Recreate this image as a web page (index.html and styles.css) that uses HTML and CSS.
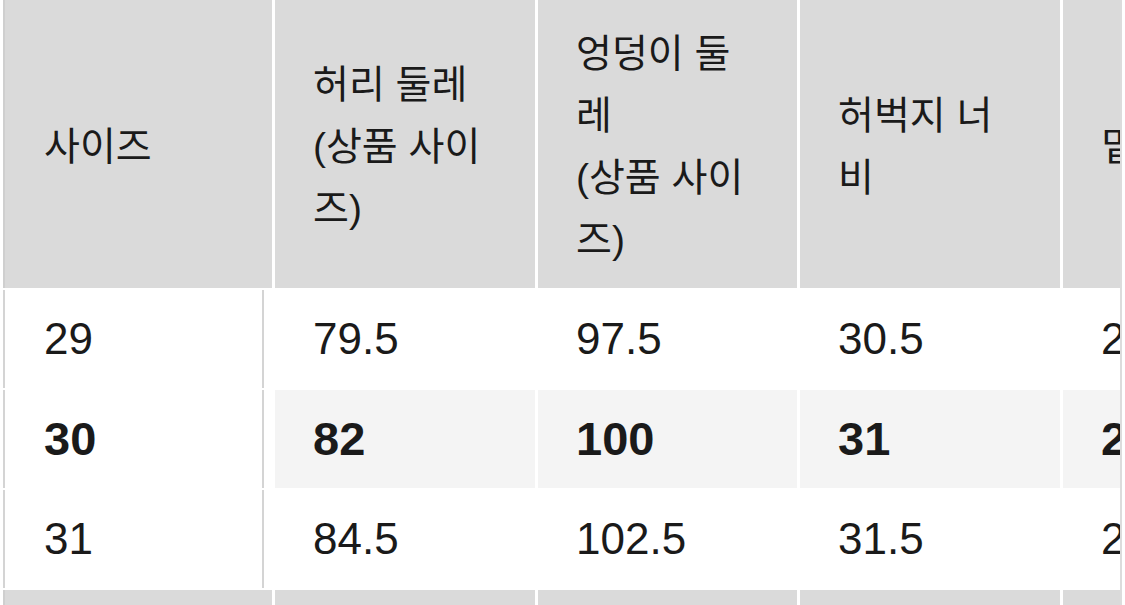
FILE: index.html
```html
<!DOCTYPE html>
<html lang="ko">
<head>
<meta charset="utf-8">
<title>사이즈표</title>
<link rel="stylesheet" href="styles.css">
</head>
<body>
<div class="frame">
  <table class="size-table">
    <colgroup>
      <col class="c1"><col class="c2"><col class="c3"><col class="c4"><col class="c5">
    </colgroup>
    <thead>
      <tr class="head">
        <th class="first">사이즈</th>
        <th>허리 둘레<br>(상품 사이즈)</th>
        <th>엉덩이 둘레<br>(상품 사이즈)</th>
        <th>허벅지 너비</th>
        <th>밑위</th>
      </tr>
    </thead>
    <tbody>
      <tr class="row">
        <td class="first">29</td><td>79.5</td><td>97.5</td><td>30.5</td><td>25.5</td>
      </tr>
      <tr class="row alt strong">
        <td class="first">30</td><td>82</td><td>100</td><td>31</td><td>26</td>
      </tr>
      <tr class="row">
        <td class="first">31</td><td>84.5</td><td>102.5</td><td>31.5</td><td>26.5</td>
      </tr>
      <tr class="tail">
        <td class="first"></td><td></td><td></td><td></td><td></td>
      </tr>
    </tbody>
  </table>
</div>
</body>
</html>
```
FILE: styles.css
```css
html, body {
  margin: 0;
  padding: 0;
  background: #ffffff;
  overflow: hidden;
}

.frame {
  width: 1120px;
  height: 605px;
  overflow: hidden;
  border-right: 2px solid #dcdcdc;
  background: #ffffff;
}

.size-table {
  table-layout: fixed;
  border-collapse: separate;
  border-spacing: 3px 2px;
  margin-top: -2px;
  width: 1326px;
  font-family: "Liberation Sans", "Noto Sans CJK KR", sans-serif;
  color: #1a1a1a;
}

.c1 { width: 269px; }
.c2 { width: 260px; }
.c3 { width: 259px; }
.c4 { width: 260px; }
.c5 { width: 260px; }

.head th {
  height: 288px;
  box-sizing: border-box;
  background: #dadada;
  font-weight: 400;
  font-size: 39px;
  line-height: 62px;
  text-align: left;
  vertical-align: middle;
  padding: 6px 40px 0 38px;
  word-break: break-all;
}

.head th.first {
  padding-left: 41px;
  box-shadow: inset 2px 0 0 #cfcfcf;
}

.row td {
  height: 98px;
  box-sizing: border-box;
  background: #ffffff;
  font-size: 44px;
  line-height: 50px;
  padding: 0 20px 0 38px;
  vertical-align: middle;
  white-space: nowrap;
  overflow: hidden;
}

.row.alt td {
  background: #f4f4f4;
}

.row.strong td {
  font-weight: 700;
  font-size: 47px;
}

.row td.first {
  padding-left: 41px;
  background: #ffffff;
  box-shadow: inset 2px 0 0 #d4d4d4, inset -8px 0 0 #ffffff, inset -10px 0 0 #d4d4d4;
}

.tail td {
  height: 30px;
  background: #dadada;
}

.tail td.first {
  box-shadow: inset 2px 0 0 #cfcfcf;
}
```
